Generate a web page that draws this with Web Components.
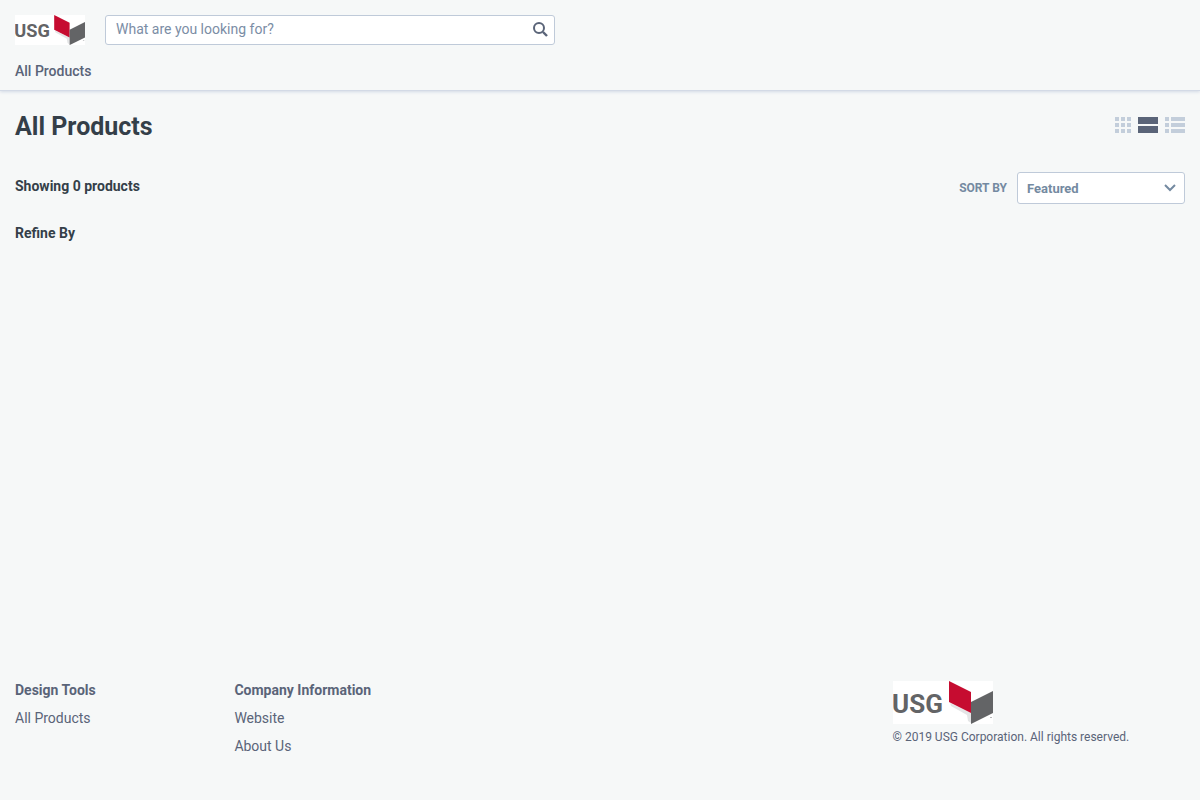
<!DOCTYPE html>
<html lang="en">
<head>
<meta charset="utf-8">
<meta name="viewport" content="width=device-width, initial-scale=1">
<title>All Products</title>
<style>
  body { margin: 0; background: #f6f8f8; color: #5a6478; font: 14px/28px Roboto, "Liberation Sans", sans-serif; }
</style>
</head>
<body>
<catalog-page></catalog-page>

<template id="usg-logo">
  <style>
    :host { display: block; width: 100px; }
    svg { display: block; width: 100%; height: auto; }
    text { font: bold 26px Roboto, "Liberation Sans", sans-serif; fill: #636466; }
  </style>
  <svg viewBox="0 0 100 43" role="img" aria-label="USG">
    <rect width="100" height="43" fill="#fff"/>
    <path d="M57 22 L78 32 V42 L75 40 L74 34 L58 25Z" fill="#e4e5e6"/>
    <path d="M56 0 L78 11 V32 L56 21Z" fill="#c60c30"/>
    <path d="M78 21 L100 10 V32 L78 43Z" fill="#636466"/>
    <path d="M97 36h2v1h-2z" fill="#b5b6b8"/>
    <text x="-1" y="32">USG</text>
  </svg>
</template>

<template id="search-box">
  <style>
    :host { display: block; flex: 0 1 450px; }
    form { display: flex; align-items: center; box-sizing: border-box; height: 30px; margin: 0; background: #fff; border: 1px solid #bfcad9; border-radius: 3px; }
    input { flex: 1; min-width: 0; border: 0; padding: 0 10px 2px; outline: 0; background: none; font: inherit; line-height: 20px; color: #5a6478; }
    input::placeholder { color: #7b8da5; opacity: 1; }
    button { display: flex; align-items: center; justify-content: center; width: 28px; height: 28px; padding: 0 0 2px; box-sizing: border-box; border: 0; background: none; }
  </style>
  <form role="search">
    <input type="search" aria-label="Search" placeholder="What are you looking for?">
    <button type="button" aria-label="Search">
      <svg width="16" height="16" viewBox="0 0 16 16" fill="none" stroke="#5a6478" stroke-width="2"><circle cx="7" cy="7" r="5"/><path d="M11 11l4 4" stroke-width="2.4"/></svg>
    </button>
  </form>
</template>

<template id="site-header">
  <style>
    :host { display: block; padding: 15px 15px 0; border-bottom: 1px solid #d3dae6; box-shadow: 0 1px 3px #d3dae6; }
    .top { display: flex; gap: 20px; align-items: center; }
    usg-logo { width: 70px; flex: none; }
    nav { padding: 12px 0 5px; }
    a { color: inherit; text-decoration: none; font-weight: 500; }
  </style>
  <div class="top"><usg-logo></usg-logo><search-box></search-box></div>
  <nav><a href="#">All Products</a></nav>
</template>

<template id="view-switch">
  <style>
    :host { display: flex; gap: 7px; }
    button { display: block; padding: 0; border: 0; background: none; color: #c3cedb; }
    button[aria-pressed="true"] { color: #5a6478; }
    svg { display: block; fill: currentColor; }
  </style>
  <button type="button" aria-label="Grid view" aria-pressed="false"><svg width="16" height="16"><path d="M0 0h4v4H0zM6 0h4v4H6zM12 0h4v4h-4zM0 6h4v4H0zM6 6h4v4H6zM12 6h4v4h-4zM0 12h4v4H0zM6 12h4v4H6zM12 12h4v4h-4z"/></svg></button>
  <button type="button" aria-label="Card view" aria-pressed="true"><svg width="20" height="16"><path d="M0 0h20v7H0zM0 9h20v7H0z"/></svg></button>
  <button type="button" aria-label="List view" aria-pressed="false"><svg width="20" height="16"><path d="M0 0h4v4H0zM6 0h14v4H6zM0 6h4v4H0zM6 6h14v4H6zM0 12h4v4H0zM6 12h14v4H6z"/></svg></button>
</template>

<template id="sort-select">
  <style>
    :host { display: flex; align-items: center; gap: 10px; color: #748aa1; font-weight: 500; }
    label { font-size: 12px; font-weight: 700; }
    .box { display: grid; align-items: center; width: 168px; }
    select, svg { grid-area: 1 / 1; }
    select { appearance: none; width: 100%; height: 32px; padding: 0 28px 0 9px; border: 1px solid #bfcad9; border-radius: 3px; background: #fff; color: inherit; font: bold 13px Roboto, "Liberation Sans", sans-serif; }
    svg { justify-self: end; margin-right: 9px; pointer-events: none; }
  </style>
  <label for="sort">SORT BY</label>
  <div class="box">
    <select id="sort"><option>Featured</option></select>
    <svg width="12" height="8" viewBox="0 0 12 8" fill="none" stroke="currentColor" stroke-width="2"><path d="M1 1l5 5 5-5"/></svg>
  </div>
</template>

<template id="product-listing">
  <style>
    :host { display: block; padding: 20px 15px; color: #343f49; }
    .row { display: flex; justify-content: space-between; align-items: center; }
    h1 { margin: 0; font-size: 25px; line-height: 32px; }
    h2, p { margin: 0; font-size: 14px; line-height: 28px; font-weight: 700; }
    .title { padding-bottom: 29px; }
    view-switch { padding-bottom: 4px; }
    .count { padding-bottom: 15px; align-items: flex-start; }
  </style>
  <div class="row title"><h1>All Products</h1><view-switch></view-switch></div>
  <div class="row count"><p>Showing 0 products</p><sort-select></sort-select></div>
  <h2>Refine By</h2>
</template>

<template id="footer-links">
  <style>
    :host { display: block; }
    h3 { margin: 0; font-size: 14px; line-height: 28px; font-weight: 700; }
    ::slotted(a) { display: block; color: inherit; text-decoration: none; }
  </style>
  <h3></h3><slot></slot>
</template>

<template id="site-footer">
  <style>
    :host { display: grid; grid-template-columns: repeat(4, 3fr) 4fr; padding: 20px 15px 40px; }
    .brand { grid-column: 5; padding-top: 5px; }
    small { display: block; font-size: 12px; line-height: 26px; }
  </style>
  <footer-links heading="Design Tools"><a href="#">All Products</a></footer-links>
  <footer-links heading="Company Information"><a href="#">Website</a><a href="#">About Us</a></footer-links>
  <div class="brand"><usg-logo></usg-logo><small>© 2019 USG Corporation. All rights reserved.</small></div>
</template>

<template id="catalog-page">
  <style>
    :host { display: flex; flex-direction: column; min-height: 100vh; }
    product-listing { flex: 1; }
  </style>
  <site-header></site-header>
  <product-listing></product-listing>
  <site-footer></site-footer>
</template>

<script>
  class TemplateElement extends HTMLElement {
    constructor() {
      super();
      const template = document.getElementById(this.localName);
      this.attachShadow({ mode: "open" }).append(template.content.cloneNode(true));
    }
  }
  class FooterLinks extends TemplateElement {
    connectedCallback() {
      this.shadowRoot.querySelector("h3").textContent = this.getAttribute("heading");
    }
  }
  for (const name of ["usg-logo", "search-box", "site-header", "view-switch", "sort-select", "product-listing", "site-footer", "catalog-page"]) {
    customElements.define(name, class extends TemplateElement {});
  }
  customElements.define("footer-links", FooterLinks);
</script>
</body>
</html>
